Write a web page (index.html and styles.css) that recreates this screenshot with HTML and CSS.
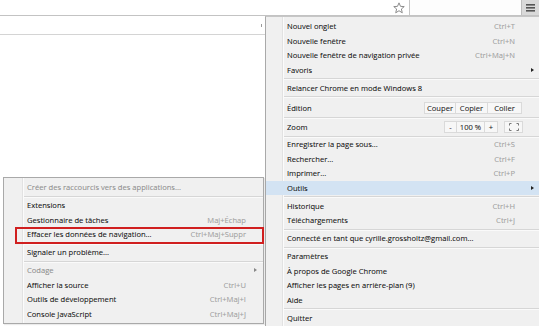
FILE: index.html
```html
<!DOCTYPE html>
<html lang="fr">
<head>
<meta charset="utf-8">
<title>Chrome menu</title>
<link rel="stylesheet" href="styles.css">
</head>
<body>
<div class="toolbar">
  <div class="omnibox">
    <svg class="star" width="12" height="12" viewBox="0 0 11 11"><path d="M5.5 0.8 L6.9 4 L10.3 4.2 L7.7 6.4 L8.5 9.9 L5.5 8 L2.5 9.9 L3.3 6.4 L0.7 4.2 L4.1 4 Z" fill="none" stroke="#8a8a8a" stroke-width="0.9" stroke-linejoin="round"/></svg>
  </div>
  <div class="tb-space"></div>
  <div class="menu-btn">
    <svg width="9" height="9" viewBox="0 0 9 9"><rect x="0" y="1" width="9" height="1.6" fill="#555"/><rect x="0" y="4" width="9" height="1.6" fill="#555"/><rect x="0" y="7" width="9" height="1.6" fill="#555"/></svg>
  </div>
</div>
<div class="page">
  <div class="pagebar"><span class="dot"></span></div>
</div>

<div class="menu main">
  <div class="item"><span class="lbl">Nouvel onglet</span><span class="sc">Ctrl+T</span></div>
  <div class="item"><span class="lbl">Nouvelle fenêtre</span><span class="sc">Ctrl+N</span></div>
  <div class="item"><span class="lbl">Nouvelle fenêtre de navigation privée</span><span class="sc">Ctrl+Maj+N</span></div>
  <div class="item"><span class="lbl">Favoris</span><span class="arrow"></span></div>
  <div class="sep"></div>
  <div class="item"><span class="lbl">Relancer Chrome en mode Windows 8</span></div>
  <div class="sep"></div>
  <div class="item tall edit"><span class="lbl">Édition</span>
    <div class="btns"><span class="b">Couper</span><span class="b">Copier</span><span class="b">Coller</span></div>
  </div>
  <div class="sep thin"></div>
  <div class="item tall zoom"><span class="lbl">Zoom</span>
    <div class="btns"><span class="b pm">-</span><span class="b pct">100 %</span><span class="b pm">+</span></div>
    <span class="b fs"><svg width="10" height="8" viewBox="0 0 10 8"><path d="M0.5 2.5V0.5H2.5M7.5 0.5H9.5V2.5M9.5 5.5V7.5H7.5M2.5 7.5H0.5V5.5" fill="none" stroke="#777" stroke-width="1"/></svg></span>
  </div>
  <div class="sep short"></div>
  <div class="item"><span class="lbl">Enregistrer la page sous...</span><span class="sc">Ctrl+S</span></div>
  <div class="item"><span class="lbl">Rechercher...</span><span class="sc">Ctrl+F</span></div>
  <div class="item"><span class="lbl">Imprimer...</span><span class="sc">Ctrl+P</span></div>
  <div class="item hl"><span class="lbl">Outils</span><span class="arrow"></span></div>
  <div class="sep"></div>
  <div class="item"><span class="lbl">Historique</span><span class="sc">Ctrl+H</span></div>
  <div class="item"><span class="lbl">Téléchargements</span><span class="sc">Ctrl+J</span></div>
  <div class="sep"></div>
  <div class="item"><span class="lbl">Connecté en tant que cyrille.grossholtz@gmail.com...</span></div>
  <div class="sep"></div>
  <div class="item"><span class="lbl">Paramètres</span></div>
  <div class="item"><span class="lbl">À propos de Google Chrome</span></div>
  <div class="item"><span class="lbl">Afficher les pages en arrière-plan (9)</span></div>
  <div class="item"><span class="lbl">Aide</span></div>
  <div class="sep"></div>
  <div class="item"><span class="lbl">Quitter</span></div>
</div>

<div class="menu sub">
  <div class="item dis"><span class="lbl">Créer des raccourcis vers des applications...</span></div>
  <div class="sep"></div>
  <div class="item"><span class="lbl">Extensions</span></div>
  <div class="item"><span class="lbl">Gestionnaire de tâches</span><span class="sc">Maj+Échap</span></div>
  <div class="item"><span class="lbl">Effacer les données de navigation...</span><span class="sc">Ctrl+Maj+Suppr</span></div>
  <div class="sep"></div>
  <div class="item"><span class="lbl">Signaler un problème...</span></div>
  <div class="sep"></div>
  <div class="item dis"><span class="lbl">Codage</span><span class="arrow"></span></div>
  <div class="item"><span class="lbl">Afficher la source</span><span class="sc">Ctrl+U</span></div>
  <div class="item"><span class="lbl">Outils de développement</span><span class="sc">Ctrl+Maj+I</span></div>
  <div class="item"><span class="lbl">Console JavaScript</span><span class="sc">Ctrl+Maj+J</span></div>
  <div class="redbox"></div>
</div>
</body>
</html>
```

FILE: styles.css
```css
html, body {
  margin: 0;
  padding: 0;
}
body {
  width: 539px;
  height: 326px;
  overflow: hidden;
  position: relative;
  background: #fff;
  font-family: "Open Sans", "Noto Sans", sans-serif;
  font-size: 7.6px;
  color: #111;
  -webkit-text-stroke: 0.07px currentColor;
}

/* toolbar */
.toolbar {
  display: flex;
  height: 15px;
  border-bottom: 1px solid #c3c3c3;
  background: #fdfdfd;
}
.omnibox {
  width: 410px;
  border-right: 1px solid #c6c6c6;
  background: #fff;
  display: flex;
  justify-content: flex-end;
  align-items: center;
  padding-right: 4px;
  box-sizing: border-box;
}
.star { display: block; }
.tb-space { flex: 1; }
.menu-btn {
  width: 17px;
  background: #d9d9d9;
  border-left: 1px solid #bdbdbd;
  display: flex;
  align-items: center;
  justify-content: center;
}
.menu-btn svg { display: block; }

.page { height: 310px; }
.pagebar {
  height: 18px;
  border-bottom: 1px solid #d4d4d4;
  position: relative;
}
.dot {
  position: absolute;
  left: 261px;
  top: 8px;
  width: 1px;
  height: 3px;
  background: #9a9a9a;
}

/* menus */
.menu {
  position: absolute;
  box-sizing: border-box;
  background:
    linear-gradient(to right, transparent var(--g), #e2e2e2 var(--g), #e2e2e2 calc(var(--g) + 1px), #fbfbfb calc(var(--g) + 1px), #fbfbfb calc(var(--g) + 2px), transparent calc(var(--g) + 2px)),
    #f0f0f0;
  border: 1px solid #a9a9a9;
}
.main {
  --g: 16px;
  left: 265px;
  top: 16px;
  width: 276px;
  height: 312px;
  padding-top: 2px;
  border-top-color: #c6c6c6;
}
.sub {
  --g: 18px;
  left: 3px;
  top: 177px;
  width: 261px;
  height: 147px;
  padding-top: 2px;
  box-shadow: 1px 1px 1px rgba(0,0,0,0.08);
}

.item {
  display: flex;
  align-items: center;
  height: 14.5px;
  white-space: nowrap;
}
.main .item { padding: 0 25px 0 21px; }
.sub .item { padding: 0 17px 0 23px; }
.lbl { flex: 1; }
.sc { color: #a0a0a0; }
.dis { color: #8e8e8e; }
.hl { background: #d3e3f3; }
.arrow {
  width: 0; height: 0;
  border-left: 3px solid #222;
  border-top: 2.5px solid transparent;
  border-bottom: 2.5px solid transparent;
  margin-right: -19px;
}
.sub .arrow { margin-right: -11px; border-left-color: #888; }

.sep {
  height: 3.5px;
  position: relative;
}
.sep::after {
  content: "";
  position: absolute;
  left: 18px; right: 0;
  top: 1px;
  height: 1px;
  background: #d6d6d6;
  box-shadow: 0 1px 0 #fafafa;
}
.sub .sep::after { left: 20px; }
.sep.thin { height: 1.5px; }
.sep.thin::after { top: 0; }
.sep.short { height: 2px; }
.sep.short::after { top: 0.5px; }

.edit { height: 18.5px; }
.zoom { height: 16.5px; }
.btns { display: flex; }
.b {
  display: flex;
  align-items: center;
  justify-content: center;
  height: 12px;
  box-sizing: border-box;
  border: 1px solid #dadada;
  background: #f7f7f7;
  color: #222;
}
.btns .b + .b { border-left: none; }
.edit .b { width: 32px; }
.edit .b:last-child { width: 34px; margin-right: -7px; }
.pm { width: 13px; }
.pct { width: 28px; }
.fs { width: 19px; margin-left: 6px; margin-right: -8px; }
.fs svg { display: block; }

.redbox {
  position: absolute;
  left: 11px;
  top: 49px;
  width: 249px;
  height: 17px;
  border: 2px solid #d01f1f;
  box-sizing: border-box;
}
```
